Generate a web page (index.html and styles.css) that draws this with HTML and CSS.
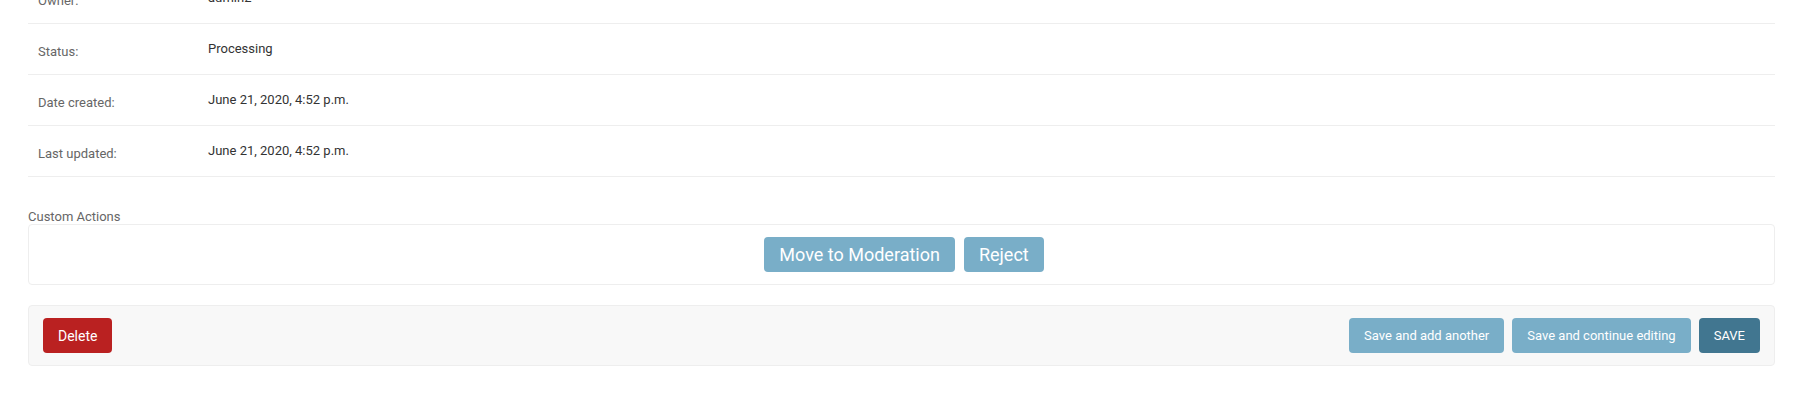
FILE: index.html
```html
<!DOCTYPE html>
<html lang="en">
<head>
<meta charset="utf-8">
<title>Change submission</title>
<link rel="stylesheet" href="styles.css">
</head>
<body>
<div class="content">
  <fieldset class="module">
    <div class="form-row">
      <div class="label">Owner:</div>
      <div class="readonly">admin2</div>
    </div>
    <div class="form-row">
      <div class="label">Status:</div>
      <div class="readonly">Processing</div>
    </div>
    <div class="form-row">
      <div class="label">Date created:</div>
      <div class="readonly">June 21, 2020, 4:52 p.m.</div>
    </div>
    <div class="form-row">
      <div class="label">Last updated:</div>
      <div class="readonly">June 21, 2020, 4:52 p.m.</div>
    </div>
  </fieldset>

  <div class="custom-actions">
    <div class="custom-title">Custom Actions</div>
    <div class="custom-box">
      <button class="btn btn-large" type="button">Move to Moderation</button>
      <button class="btn btn-large" type="button">Reject</button>
    </div>
  </div>

  <div class="submit-row">
    <a class="deletelink" href="#">Delete</a>
    <div class="submit-actions">
      <button class="btn" type="button">Save and add another</button>
      <button class="btn" type="button">Save and continue editing</button>
      <button class="btn btn-default" type="button">SAVE</button>
    </div>
  </div>
</div>
</body>
</html>
```

FILE: styles.css
```css
* {
  box-sizing: border-box;
}

html, body {
  margin: 0;
  padding: 0;
  background: #fff;
}

body {
  font-family: Roboto, "Liberation Sans", Arial, sans-serif;
  font-size: 13px;
  color: #333;
}

.content {
  margin: -27px 27px 0 28px;
}

.module {
  margin: 0;
  padding: 0;
  border: none;
  min-width: 0;
}

.form-row {
  display: flex;
  height: 51px;
  padding: 17px 10px 0;
  border-bottom: 1px solid #eee;
}

.label {
  width: 170px;
  flex: none;
  padding: 3px 10px 0 0;
  line-height: 15px;
  color: #666;
}

.readonly {
  line-height: 15px;
  color: #333;
}

.custom-actions {
  margin-top: 32px;
}

.custom-title {
  line-height: 15px;
  color: #666;
}

.custom-box {
  display: flex;
  justify-content: center;
  gap: 4px;
  padding: 12px 14px;
  border: 1px solid #eee;
  border-radius: 4px;
}

.btn {
  display: inline-flex;
  align-items: center;
  height: 35px;
  padding: 0 15px;
  border: none;
  border-radius: 4px;
  background: #79aec8;
  color: #fff;
  font-family: Roboto, "Liberation Sans", Arial, sans-serif;
  font-size: 13px;
  line-height: 15px;
  cursor: pointer;
}

.btn-large {
  font-size: 18px;
  margin-left: 5px;
}

.btn-default {
  background: #417690;
}

.submit-row {
  display: flex;
  justify-content: space-between;
  align-items: center;
  margin-top: 20px;
  padding: 12px 14px;
  background: #f8f8f8;
  border: 1px solid #eee;
  border-radius: 4px;
}

.deletelink {
  display: inline-flex;
  align-items: center;
  height: 35px;
  padding: 0 15px;
  border-radius: 4px;
  background: #ba2121;
  color: #fff;
  font-size: 14px;
  text-decoration: none;
}

.submit-actions {
  display: flex;
  gap: 8px;
}
```
